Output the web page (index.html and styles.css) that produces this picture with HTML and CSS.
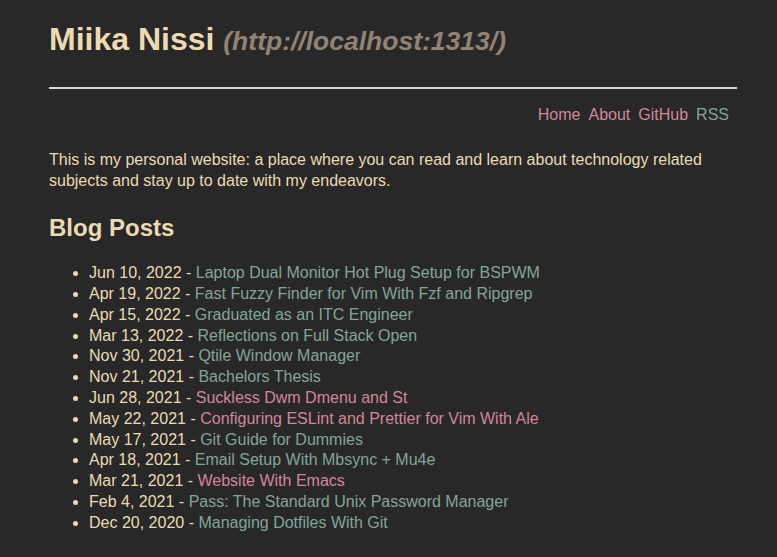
FILE: index.html
```html
<!DOCTYPE html>
<html lang="en">
<head>
<meta charset="utf-8">
<title>Miika Nissi</title>
<link rel="stylesheet" href="styles.css">
</head>
<body>
<div class="page">
  <header class="site-header">
    <h1 class="site-title">Miika Nissi <span class="site-url">(http://localhost:1313/)</span></h1>
    <hr class="rule">
    <nav class="nav">
      <a class="visited" href="#">Home</a>
      <a class="visited" href="#">About</a>
      <a class="visited" href="#">GitHub</a>
      <a href="#">RSS</a>
    </nav>
  </header>
  <main>
    <p class="intro">This is my personal website: a place where you can read and learn about technology related subjects and stay up to date with my endeavors.</p>
    <h2 class="section-title">Blog Posts</h2>
    <ul class="posts">
      <li>Jun 10, 2022 - <a href="#">Laptop Dual Monitor Hot Plug Setup for BSPWM</a></li>
      <li>Apr 19, 2022 - <a href="#">Fast Fuzzy Finder for Vim With Fzf and Ripgrep</a></li>
      <li>Apr 15, 2022 - <a href="#">Graduated as an ITC Engineer</a></li>
      <li>Mar 13, 2022 - <a href="#">Reflections on Full Stack Open</a></li>
      <li>Nov 30, 2021 - <a href="#">Qtile Window Manager</a></li>
      <li>Nov 21, 2021 - <a href="#">Bachelors Thesis</a></li>
      <li>Jun 28, 2021 - <a class="visited" href="#">Suckless Dwm Dmenu and St</a></li>
      <li>May 22, 2021 - <a class="visited" href="#">Configuring ESLint and Prettier for Vim With Ale</a></li>
      <li>May 17, 2021 - <a href="#">Git Guide for Dummies</a></li>
      <li>Apr 18, 2021 - <a href="#">Email Setup With Mbsync + Mu4e</a></li>
      <li>Mar 21, 2021 - <a class="visited" href="#">Website With Emacs</a></li>
      <li>Feb 4, 2021 - <a href="#">Pass: The Standard Unix Password Manager</a></li>
      <li>Dec 20, 2020 - <a href="#">Managing Dotfiles With Git</a></li>
    </ul>
  </main>
</div>
</body>
</html>
```
FILE: styles.css
```css
html, body {
  margin: 0;
  background: #282828;
}
body {
  color: #ebdbb2;
  font-family: "Liberation Sans", Arial, sans-serif;
  font-size: 16px;
  line-height: 1.3;
}
.page {
  padding: 19px 40px 20px 49px;
}
a {
  color: #83a598;
  text-decoration: none;
}
a.visited {
  color: #d3869b;
}
.site-title {
  margin: 0;
  font-size: 32px;
  font-weight: bold;
  line-height: 1.3;
}
.site-url {
  color: #928374;
  font-style: italic;
  font-size: 26.5px;
}
.rule {
  margin: 26px 0 0;
  border: none;
  height: 2px;
  background: #d9d9d9;
}
.nav {
  display: flex;
  justify-content: flex-end;
  gap: 8px;
  padding-right: 8px;
  margin-top: 16px;
}
.intro {
  margin: 25px 0 0;
}
.section-title {
  margin: 20px 0 0;
  font-size: 24px;
  line-height: 1.3;
}
.posts {
  margin: 20px 0 0;
  padding-left: 40px;
}
```
